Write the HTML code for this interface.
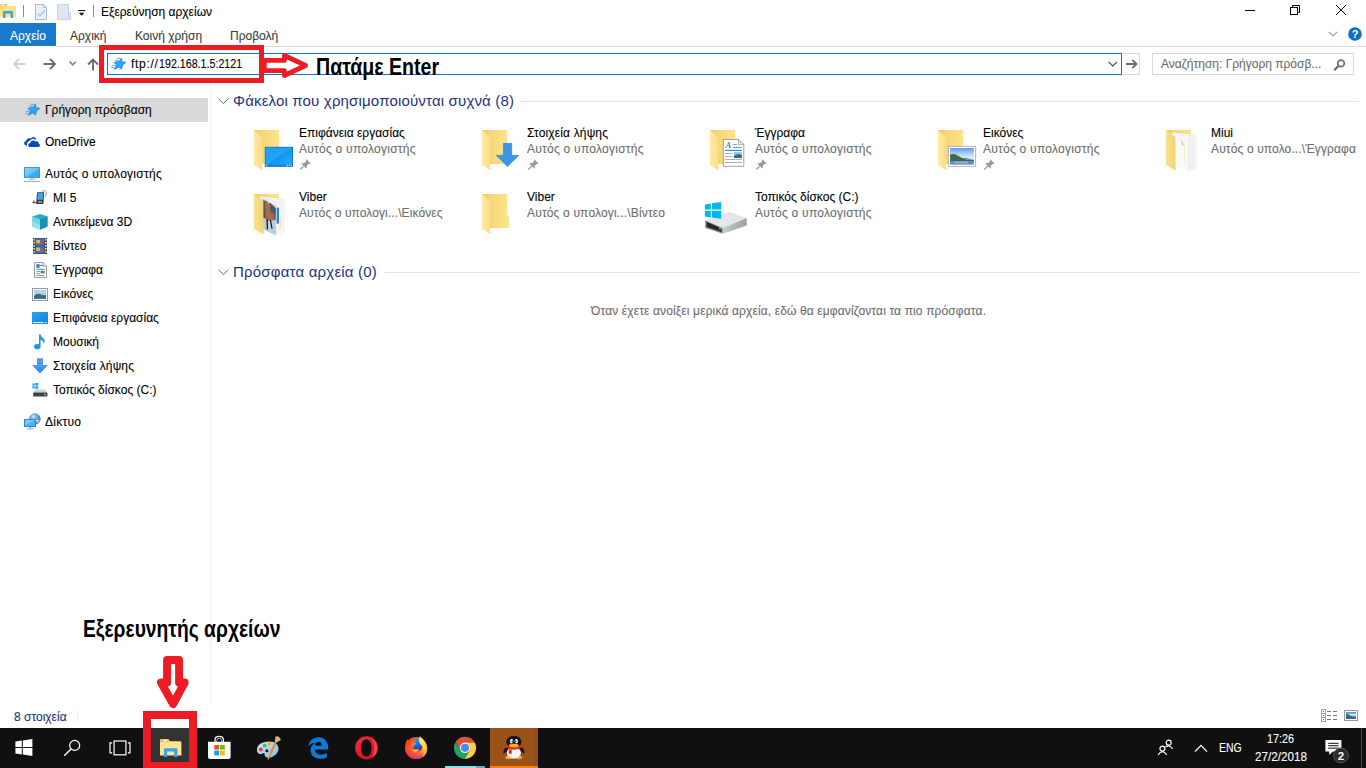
<!DOCTYPE html>
<html>
<head>
<meta charset="utf-8">
<title>Explorer</title>
<style>
html,body{margin:0;padding:0;}
body{width:1366px;height:768px;position:relative;overflow:hidden;background:#fff;font-family:"Liberation Sans",sans-serif;font-size:12px;color:#000;}
.a{position:absolute;white-space:nowrap;line-height:1;}
.t{position:absolute;white-space:nowrap;line-height:14px;font-size:12px;transform-origin:0 50%;-webkit-text-stroke:0.1px currentColor;}
.g{color:#6d6d6d;}
svg{position:absolute;overflow:visible;}
</style>
</head>
<body>

<!-- ================= TITLE BAR ================= -->
<div id="titlebar">
<svg style="left:0;top:4px" width="17" height="15" viewBox="0 0 17 15">
  <path d="M0 1.2 Q0 0 1.2 0 H6.5 L8 2 H15 Q16 2 16 3 V13 H0 Z" fill="#ffe083"/>
  <rect x="0" y="0" width="7" height="2.6" rx="1" fill="#f5c646"/>
  <rect x="1.3" y="0.8" width="3.5" height="1" fill="#fff"/>
  <path d="M3 14 V7.6 Q3 7 3.6 7 H12.4 Q13 7 13 7.6 V14 H10.6 V9.4 H5.4 V14 Z" fill="#3aa7e4"/>
</svg>
<div class="a" style="left:23px;top:5px;width:1px;height:12px;background:#8a8a8a"></div>
<svg style="left:35px;top:4px" width="13" height="16" viewBox="0 0 13 16">
  <path d="M0.5 0.5 H8.5 L11.5 3.5 V15.5 H0.5 Z" fill="#e9eff9" stroke="#a9b8d3"/>
  <path d="M8.5 0.5 V3.5 H11.5" fill="none" stroke="#a9b8d3" stroke-width="0.8"/>
  <path d="M2.6 9.4 L5 11.6 L9.6 6.6" fill="none" stroke="#a9b8d3" stroke-width="1.2"/>
</svg>
<svg style="left:57px;top:4px" width="14" height="16" viewBox="0 0 14 16">
  <path d="M0.5 0.5 H11.5 V9 H13.5 V15.5 H0.5 Z" fill="#dfe7f5" stroke="#c3d0e8"/>
  <path d="M11.5 9 V15.5" stroke="#c3d0e8" fill="none"/>
</svg>
<svg style="left:78px;top:10px" width="8" height="7" viewBox="0 0 8 7">
  <rect x="0" y="0" width="7.2" height="1.1" fill="#111"/>
  <path d="M0.8 2.8 H6.4 L3.6 5.8 Z" fill="#111"/>
</svg>
<div class="a" style="left:93px;top:5px;width:1px;height:12px;background:#8a8a8a"></div>
<div class="t" id="title" style="left:101px;top:5px;">Εξερεύνηση αρχείων</div>
<!-- window controls -->
<div class="a" style="left:1245px;top:10px;width:10px;height:1px;background:#000"></div>
<svg style="left:1289px;top:4px" width="12" height="12" viewBox="0 0 12 12">
  <rect x="1.5" y="3.5" width="7" height="7" fill="#fff" stroke="#000"/>
  <path d="M3.5 3.5 V1.5 H10.5 V8.5 H8.5" fill="none" stroke="#000"/>
</svg>
<svg style="left:1335px;top:4px" width="12" height="12" viewBox="0 0 12 12">
  <path d="M1 1 L11 11 M11 1 L1 11" stroke="#000" stroke-width="1" fill="none"/>
</svg>
</div>

<!-- ================= RIBBON TABS ================= -->
<div id="ribbon">
<div class="a" style="left:0;top:23px;width:56px;height:23px;background:#1979ca"></div>
<div class="a" style="left:56px;top:46px;width:1310px;height:1px;background:#dadbdc"></div>
<div class="t" id="tab1" style="margin-top:1px;left:10px;top:28px;color:#fff">Αρχείο</div>
<div class="t" id="tab2" style="margin-top:1px;left:70px;top:28px;color:#3b3b3b">Αρχική</div>
<div class="t" id="tab3" style="margin-top:1px;left:135px;top:28px;color:#3b3b3b">Κοινή χρήση</div>
<div class="t" id="tab4" style="margin-top:1px;left:230px;top:28px;color:#3b3b3b">Προβολή</div>
<svg style="left:1328px;top:31px" width="10" height="6" viewBox="0 0 10 6">
  <path d="M0.8 0.8 L5 5 L9.2 0.8" fill="none" stroke="#9a9a9a" stroke-width="1.1"/>
</svg>
<svg style="left:1348px;top:27px" width="14" height="14" viewBox="0 0 14 14">
  <circle cx="7" cy="7" r="6.8" fill="#0f6fc8"/>
  <text x="7" y="11" text-anchor="middle" font-family="Liberation Sans" font-weight="bold" font-size="11" fill="#fff">?</text>
</svg>
</div>

<!-- ================= ADDRESS BAR ================= -->
<div id="addr">
<!-- back -->
<svg style="left:13px;top:58px" width="13" height="12" viewBox="0 0 13 12">
  <path d="M12.5 6 H1.5 M6 1 L1 6 L6 11" fill="none" stroke="#d2d2d2" stroke-width="1.9"/>
</svg>
<!-- forward -->
<svg style="left:43px;top:58px" width="13" height="12" viewBox="0 0 13 12">
  <path d="M0.5 6 H11.5 M7 1 L12 6 L7 11" fill="none" stroke="#6d6d6d" stroke-width="1.9"/>
</svg>
<!-- recent chevron -->
<svg style="left:69px;top:61px" width="8" height="5" viewBox="0 0 8 5">
  <path d="M0.6 0.6 L3.7 3.8 L6.8 0.6" fill="none" stroke="#858585" stroke-width="1.6"/>
</svg>
<!-- up -->
<svg style="left:87px;top:58px" width="12" height="13" viewBox="0 0 12 13">
  <path d="M6 12.5 V1.5 M1 6.5 L6 1.5 L11 6.5" fill="none" stroke="#6d6d6d" stroke-width="1.9"/>
</svg>
<!-- address box -->
<div class="a" style="left:107px;top:53px;width:1013px;height:20px;border:1px solid #0078d7;box-sizing:content-box;background:#fff"></div>
<!-- quick access star -->
<svg id="addrstar" style="left:111px;top:57.3px" width="16" height="14" viewBox="0 0 16 14">
  <path d="M10.4 0.9 L11.1 4.8 L14.9 5.3 L11.7 7.9 L10.4 12.2 L7.8 10 L3.2 12.5 L5.4 7.9 L2.9 5.3 L8 4.6 Z" fill="#2aa5f7" stroke="#1489dc" stroke-width="0.7" stroke-linejoin="round"/>
  <path d="M5.9 1.3 H8.8 M4.4 3.4 H7.2 M1.5 8.3 H3.9 M0.5 10.4 H2.8" stroke="#3aa2e8" stroke-width="0.9" stroke-linecap="round" fill="none"/>
</svg>
<div class="t" id="addrtxt" style="left:131px;top:57px;color:#000"><span style="letter-spacing:0.7px">ftp://</span><span style="display:inline-block;transform:scaleX(0.89);transform-origin:0 50%">192.168.1.5:2121</span></div>
<!-- dropdown chevron -->
<svg style="left:1108px;top:61px" width="10" height="6" viewBox="0 0 10 6">
  <path d="M0.6 0.8 L4.8 5 L9 0.8" fill="none" stroke="#444" stroke-width="1.1"/>
</svg>
<!-- go button -->
<div class="a" style="left:1123px;top:53px;width:16px;height:20px;border:1px solid #d9d9d9;border-left:none"></div>
<svg style="left:1126px;top:59px" width="12" height="10" viewBox="0 0 12 10">
  <path d="M0 5 H10.5 M6.3 0.8 L10.6 5 L6.3 9.2" fill="none" stroke="#6d6d6d" stroke-width="1.8"/>
</svg>
<!-- search box -->
<div class="a" style="left:1152px;top:53px;width:200px;height:20px;border:1px solid #d9d9d9"></div>
<div class="t" id="srch" style="left:1161px;top:57px;color:#6d6d6d">Αναζήτηση: Γρήγορη πρόσβ...</div>
<svg style="left:1333px;top:59px" width="13" height="12" viewBox="0 0 13 12">
  <circle cx="8" cy="4.4" r="3.3" fill="none" stroke="#6d6d6d" stroke-width="1.7"/>
  <path d="M5.6 6.8 L1.2 11.2" stroke="#6d6d6d" stroke-width="2.2" fill="none"/>
</svg>
</div>

<!-- ================= NAV PANE ================= -->
<div id="nav">
<div class="a" style="left:0;top:98px;width:208px;height:24px;background:#d9d9d9"></div>
<div class="a" style="left:210px;top:84px;width:1px;height:621px;background:#f2f2f2"></div>
<svg style="left:25px;top:103px" width="16" height="14" viewBox="0 0 16 14">
  <path d="M10.4 0.9 L11.1 4.8 L14.9 5.3 L11.7 7.9 L10.4 12.2 L7.8 10 L3.2 12.5 L5.4 7.9 L2.9 5.3 L8 4.6 Z" fill="#2aa5f7" stroke="#1489dc" stroke-width="0.7" stroke-linejoin="round"/>
  <path d="M5.9 1.3 H8.8 M4.4 3.4 H7.2 M1.5 8.3 H3.9 M0.5 10.4 H2.8" stroke="#3aa2e8" stroke-width="0.9" stroke-linecap="round" fill="none"/>
</svg>
<div class="t" id="n0" style="left:45px;top:103px">Γρήγορη πρόσβαση</div>
<svg style="left:20px;top:132px" width="28" height="20" viewBox="0 0 28 20">
  <path d="M4 11.2 Q4.2 9.2 6.2 8.7 Q6.6 6.5 9 6.2 Q10 6.1 10.6 6.4 Q12 4.8 13.7 4.9 Q15.7 5.2 16.3 7.4 L15.1 7.8 Q14.2 6.5 12.8 6.7 Q11 7 9.7 8.7 Q8 9.5 7.3 10.7 Q6.7 12 7 13.6 Q4.4 13.9 4 11.2 Z" fill="#0b4bb3"/>
  <path d="M9.2 15 Q8 14 8.2 12.6 Q8.6 11.2 10.2 11 Q10.6 8.7 12.8 8.4 Q14.6 8.3 15.5 9.6 Q16.7 8.9 17.8 9.6 Q18.8 10.4 18.8 11.8 Q20.2 12.2 20 13.6 Q19.8 15 18.6 15 Z" fill="#0b4bb3"/>
</svg>
<div class="t" id="n1" style="left:45px;top:135px">OneDrive</div>
<svg style="left:24px;top:167px" width="16" height="15" viewBox="0 0 16 15">
  <defs><linearGradient id="pcg" x1="0" y1="0" x2="1" y2="1"><stop offset="0" stop-color="#8fd6fb"/><stop offset="0.55" stop-color="#5cc0f7"/><stop offset="0.56" stop-color="#3fb0f3"/><stop offset="1" stop-color="#2ea3ee"/></linearGradient></defs>
  <rect x="0.5" y="0.5" width="15" height="10" fill="url(#pcg)" stroke="#3b97d3"/>
  <rect x="6.5" y="11" width="3" height="1.5" fill="#b9c3cc"/>
  <rect x="4" y="12.2" width="8" height="0.9" fill="#b9c3cc"/>
  <rect x="0" y="14" width="16" height="1" fill="#9fb2c4"/>
</svg>
<div class="t" id="n2" style="left:45px;top:167px;letter-spacing:0.26px">Αυτός ο υπολογιστής</div>
<svg style="left:32px;top:190px" width="16" height="15" viewBox="0 0 16 15">
  <path d="M10.5 2 Q11 0.2 13 0.6 Q15.2 1.4 14.2 4 L13 6.5" fill="none" stroke="#7a7a7a" stroke-width="0.8"/>
  <path d="M5.2 2.2 L12.2 2.2 L11.4 14 L4 14 Z" fill="#3a3a3a"/>
  <path d="M6 3.1 L11.3 3.1 L10.8 9.8 L5.3 9.8 Z" fill="#3aa6ef"/>
  <rect x="6" y="11" width="4" height="2" fill="#8d8d8d"/>
  <path d="M0.5 12.5 H3.8 M1 11 L2.2 11 L2.2 13.5" stroke="#555" stroke-width="1" fill="none"/>
</svg>
<div class="t" id="n3" style="left:53px;top:191px">MI 5</div>
<svg style="left:32px;top:214px" width="16" height="16" viewBox="0 0 16 16">
  <path d="M8 0.3 L15.5 2.6 L15.5 12.4 L8 15.7 L0.5 12.4 L0.5 2.6 Z" fill="#32b8d4"/>
  <path d="M0.5 2.6 L8 5 L8 15.7 L0.5 12.4 Z" fill="#6fd6e6"/>
  <path d="M8 0.3 L15.5 2.6 L8 5 L0.5 2.6 Z" fill="#2ea9c6"/>
  <path d="M8 5 L15.5 2.6 L15.5 12.4 L8 15.7 Z" fill="#1d8fb0"/>
  <path d="M0.5 8 L8 11 L8 15.7 L0.5 12.4 Z" fill="#a5e7f0" opacity="0.7"/>
</svg>
<div class="t" id="n4" style="left:53px;top:215px">Αντικείμενα 3D</div>
<svg style="left:33px;top:238px" width="14" height="16" viewBox="0 0 14 16">
  <rect x="0" y="0" width="14" height="16" fill="#4a4a4a"/>
  <rect x="2.6" y="0.8" width="8.8" height="6.8" fill="#3b6fd0"/>
  <rect x="2.6" y="8.4" width="8.8" height="6.8" fill="#3b6fd0"/>
  <rect x="3.2" y="2" width="4" height="3.4" fill="#e2b93b"/><rect x="7.6" y="3" width="3" height="3" fill="#c9473b"/>
  <rect x="3.2" y="9.6" width="4" height="3.4" fill="#e2b93b"/><rect x="7.6" y="10.6" width="3" height="3" fill="#c9473b"/>
  <g fill="#fff"><rect x="0.6" y="1" width="1.2" height="1.6"/><rect x="0.6" y="4" width="1.2" height="1.6"/><rect x="0.6" y="7" width="1.2" height="1.6"/><rect x="0.6" y="10" width="1.2" height="1.6"/><rect x="0.6" y="13" width="1.2" height="1.6"/>
  <rect x="12.2" y="1" width="1.2" height="1.6"/><rect x="12.2" y="4" width="1.2" height="1.6"/><rect x="12.2" y="7" width="1.2" height="1.6"/><rect x="12.2" y="10" width="1.2" height="1.6"/><rect x="12.2" y="13" width="1.2" height="1.6"/></g>
</svg>
<div class="t" id="n5" style="left:53px;top:239px">Βίντεο</div>
<svg style="left:34px;top:262px" width="13" height="16" viewBox="0 0 13 16">
  <path d="M0.5 0.5 H9 L12.5 4 V15.5 H0.5 Z" fill="#fff" stroke="#9a9a9a"/>
  <path d="M9 0.5 V4 H12.5" fill="#eee" stroke="#9a9a9a"/>
  <rect x="2.4" y="2.2" width="3.2" height="3.6" fill="#2e74cf"/>
  <rect x="6.2" y="3" width="2.4" height="1" fill="#2e74cf"/>
  <rect x="2.4" y="6.8" width="8.2" height="1" fill="#2e8fde"/>
  <rect x="2.4" y="9" width="3.6" height="0.9" fill="#8a8a8a"/><rect x="6.6" y="8.8" width="4" height="2.6" fill="#3c8f86"/>
  <rect x="2.4" y="11" width="3.6" height="0.9" fill="#8a8a8a"/>
  <rect x="2.4" y="13" width="8.2" height="0.9" fill="#8a8a8a"/>
</svg>
<div class="t" id="n6" style="left:53px;top:263px">Έγγραφα</div>
<svg style="left:32px;top:288px" width="16" height="13" viewBox="0 0 16 13">
  <rect x="0.5" y="0.5" width="15" height="12" fill="#fff" stroke="#9a9a9a"/>
  <rect x="2" y="2" width="12" height="9" fill="#a9d4ee"/>
  <path d="M2 8 Q5 4.6 9 6.6 Q12 7.4 14 7 V11 H2 Z" fill="#3f6f6a"/>
  <rect x="2" y="9.4" width="12" height="1.6" fill="#2f78b8"/>
</svg>
<div class="t" id="n7" style="left:53px;top:287px">Εικόνες</div>
<svg style="left:32px;top:312px" width="16" height="12" viewBox="0 0 16 13" preserveAspectRatio="none">
  <defs><linearGradient id="dkg" x1="0" y1="0" x2="1" y2="1"><stop offset="0" stop-color="#2ea1ef"/><stop offset="0.5" stop-color="#1f93ea"/><stop offset="1" stop-color="#0e83e0"/></linearGradient></defs>
  <rect x="0" y="0" width="16" height="13" fill="url(#dkg)"/>
  <rect x="1" y="11" width="10.5" height="1" fill="#fff"/><rect x="12.4" y="11" width="1" height="1" fill="#fff"/><rect x="14" y="11" width="1" height="1" fill="#fff"/>
</svg>
<div class="t" id="n8" style="left:53px;top:311px">Επιφάνεια εργασίας</div>
<svg style="left:34px;top:334px" width="12" height="16" viewBox="0 0 12 16">
  <path d="M5 0.5 H6.6 Q7.2 3 9.6 4.6 Q11.8 6.6 9.6 10.4 Q10 7.2 6.6 5.6 V12.6 A3.3 2.8 0 1 1 5 10.2 Z" fill="#2793ea"/>
</svg>
<div class="t" id="n9" style="left:53px;top:335px">Μουσική</div>
<svg style="left:32px;top:358px" width="16" height="16" viewBox="0 0 16 16">
  <path d="M5.2 0.5 H10.8 V7.2 H15.6 L8 15.5 L0.4 7.2 H5.2 Z" fill="#3c8de2"/>
  <path d="M5.2 0.5 H10.8 V7.2 H15.6 L13.6 9.4 H2.4 L0.4 7.2 H5.2 Z" fill="#4a9bec"/>
</svg>
<div class="t" id="n10" style="left:53px;top:359px;letter-spacing:0.15px">Στοιχεία λήψης</div>
<svg style="left:32px;top:383px" width="16" height="14" viewBox="0 0 16 14">
  <g fill="#1fa3e8"><rect x="0.4" y="0.4" width="2.4" height="2.2"/><rect x="3.4" y="0" width="2.8" height="2.6"/><rect x="0.4" y="3.2" width="2.4" height="2.2"/><rect x="3.4" y="3.2" width="2.8" height="2.6"/></g>
  <path d="M3.4 6.6 H13 L15.4 9.6 H1.2 Z" fill="#cfd2d4"/>
  <rect x="1.2" y="9.6" width="14.2" height="4" rx="0.6" fill="#3e4042"/>
  <rect x="12" y="11" width="1.8" height="1.3" fill="#4be05a"/>
</svg>
<div class="t" id="n11" style="left:53px;top:383px">Τοπικός δίσκος (C:)</div>
<svg style="left:24px;top:413px" width="17" height="17" viewBox="0 0 17 17">
  <defs><radialGradient id="glb" cx="0.4" cy="0.35" r="0.7"><stop offset="0" stop-color="#9fd0ee"/><stop offset="1" stop-color="#2c72b4"/></radialGradient></defs>
  <circle cx="10.8" cy="6" r="5.8" fill="url(#glb)"/>
  <path d="M7.6 2.4 Q10 1.4 11.6 2.8 Q10.6 5 8.4 4.6 Z M12 6.6 Q14.6 6 15.6 8 Q14 10.4 12.4 9.6 Z" fill="#cfe6f4" opacity="0.8"/>
  <rect x="0.5" y="6.5" width="11" height="7" fill="#49b4f4" stroke="#2f86c8"/>
  <path d="M1 7 L11 7 L1 12 Z" fill="#86d0fa" opacity="0.8"/>
  <rect x="5" y="14" width="2" height="1.4" fill="#9ab0c2"/><rect x="2.6" y="15.4" width="7" height="1" fill="#9ab0c2"/>
</svg>
<div class="t" id="n12" style="left:45px;top:415px;letter-spacing:0.25px">Δίκτυο</div>
</div>

<!-- ================= CONTENT ================= -->
<div id="content">
<svg width="0" height="0" style="left:0;top:0"><defs>
<linearGradient id="fb" x1="0" y1="0" x2="1" y2="0"><stop offset="0" stop-color="#efcb68"/><stop offset="0.6" stop-color="#fadc7f"/><stop offset="1" stop-color="#fde38c"/></linearGradient>
<linearGradient id="ff" x1="0" y1="0" x2="1" y2="0"><stop offset="0" stop-color="#ffe9a6"/><stop offset="1" stop-color="#fbdc82"/></linearGradient>
<linearGradient id="dsk" x1="0" y1="0" x2="1" y2="1"><stop offset="0" stop-color="#23a0f3"/><stop offset="0.48" stop-color="#21a3f6"/><stop offset="0.5" stop-color="#0f96f0"/><stop offset="1" stop-color="#2aa8f8"/></linearGradient>
<linearGradient id="sky" x1="0" y1="0" x2="0" y2="1"><stop offset="0" stop-color="#5f9dea"/><stop offset="0.5" stop-color="#cfe6f6"/><stop offset="1" stop-color="#e8f3fa"/></linearGradient>
<linearGradient id="drv" x1="0" y1="0" x2="1" y2="0"><stop offset="0" stop-color="#c9cbcd"/><stop offset="1" stop-color="#9d9fa1"/></linearGradient>
<g id="fback"><path d="M7.9 7.9 H33.2 V41.9 H16 Z" fill="url(#fb)"/></g>
<g id="ffront"><path d="M7.9 8.1 L17 15.4 V37.2 L16.1 37.8 V48.2 L7.9 42.8 Z" fill="url(#ff)"/></g>
<linearGradient id="ff2" x1="0" y1="0" x2="1" y2="0"><stop offset="0" stop-color="#fbe08c"/><stop offset="1" stop-color="#f5d370"/></linearGradient>
<g id="ffront2"><path d="M8.1 8.1 L17.4 15.2 V48.6 L8.1 42.8 Z" fill="url(#ff2)"/></g>
<g id="pin"><path d="M6.2 0.4 L10 4.2 L9.2 4.9 L8.5 4.4 L6.4 6.5 Q6.9 8 5.9 9 L1.4 4.5 Q2.4 3.5 3.9 4 L6 1.9 L5.5 1.2 Z" fill="#909ba3"/><path d="M3.4 6.9 L0.3 10" stroke="#909ba3" stroke-width="1.1"/></g>
</defs></svg>
<svg style="left:218px;top:98px" width="11" height="7" viewBox="0 0 11 7"><path d="M0.5 0.6 L5.4 5.6 L10.3 0.6" fill="none" stroke="#6d6d6d" stroke-width="1"/></svg>
<div class="a" id="h1" style="left:233px;top:92px;font-size:15px;line-height:17px;color:#1e3287;letter-spacing:0.17px">Φάκελοι που χρησιμοποιούνται συχνά (8)</div>
<div class="a" style="left:521px;top:101px;width:838px;height:1px;background:#e2e2e2"></div>
<svg style="left:218px;top:269px" width="11" height="7" viewBox="0 0 11 7"><path d="M0.5 0.6 L5.4 5.6 L10.3 0.6" fill="none" stroke="#6d6d6d" stroke-width="1"/></svg>
<div class="a" id="h2" style="left:233px;top:263px;font-size:15px;line-height:17px;color:#1e3287;letter-spacing:0.2px">Πρόσφατα αρχεία (0)</div>
<div class="a" style="left:385px;top:272px;width:974px;height:1px;background:#e2e2e2"></div>
<svg style="left:246px;top:122px" width="56" height="56" viewBox="0 0 56 56"><use href="#fback"/><path d="M16.1 48.2 L19.5 46.4 L16.1 45 Z" fill="#e9e9e9" opacity="0.7"/><use href="#ffront"/><rect x="19.3" y="25.3" width="27.2" height="19" fill="url(#dsk)" stroke="#0b78c6"/>
<rect x="19.8" y="42.6" width="26.2" height="1.6" fill="#0b78c6" opacity="0.6"/>
<rect x="20.2" y="42.8" width="1" height="1" fill="#fff"/><rect x="40.8" y="42.8" width="1" height="1" fill="#fff"/><rect x="42.8" y="42.8" width="1" height="1" fill="#fff"/><rect x="44.8" y="42.8" width="1" height="1" fill="#fff"/></svg>
<div class="t" id="tn0" style="left:299px;top:126px">Επιφάνεια εργασίας</div>
<div class="t g" id="ts0" style="left:299px;top:142px;letter-spacing:0.25px">Αυτός ο υπολογιστής</div>
<svg style="left:299.6px;top:158.6px" width="11.6" height="10.5" viewBox="0 0 11 10"><use href="#pin"/></svg>
<svg style="left:474px;top:122px" width="56" height="56" viewBox="0 0 56 56"><use href="#fback"/><path d="M16.1 48.2 L19.5 46.4 L16.1 45 Z" fill="#e9e9e9" opacity="0.7"/><use href="#ffront"/><path d="M29.4 21.3 H37.7 V33.3 H45 L33.5 44.6 L22 33.3 H29.4 Z" fill="#3c96e8" stroke="#2b7fd6" stroke-width="0.6"/></svg>
<div class="t" id="tn1" style="left:527px;top:126px;letter-spacing:0.15px">Στοιχεία λήψης</div>
<div class="t g" id="ts1" style="left:527px;top:142px;letter-spacing:0.25px">Αυτός ο υπολογιστής</div>
<svg style="left:527.6px;top:158.6px" width="11.6" height="10.5" viewBox="0 0 11 10"><use href="#pin"/></svg>
<svg style="left:702px;top:122px" width="56" height="56" viewBox="0 0 56 56"><use href="#fback"/><path d="M16.1 48.2 L19.5 46.4 L16.1 45 Z" fill="#e9e9e9" opacity="0.7"/><use href="#ffront"/><path d="M21.4 17.5 H36.5 L41.8 22.6 V44.3 H21.4 Z" fill="#fff" stroke="#8e8e8e" stroke-width="0.8"/>
<path d="M36.5 17.5 V22.6 H41.8 Z" fill="#e4e4e4" stroke="#8e8e8e" stroke-width="0.6"/>
<text x="23.6" y="25.8" font-family="Liberation Serif" font-style="italic" font-weight="bold" font-size="8.5" fill="#1f86dc">A</text>
<rect x="31.4" y="21.9" width="3.4" height="0.9" fill="#3a98e4"/><rect x="31" y="25" width="8.8" height="0.9" fill="#3a98e4"/>
<rect x="23" y="27.9" width="17" height="1" fill="#0d7fd8"/>
<rect x="23" y="31" width="7.8" height="0.9" fill="#a6a6a6"/><rect x="23" y="34" width="7.8" height="0.9" fill="#a6a6a6"/>
<rect x="23" y="37" width="17" height="0.9" fill="#a6a6a6"/><rect x="23" y="40" width="17" height="0.9" fill="#a6a6a6"/>
<rect x="32" y="30.2" width="7.8" height="5.6" fill="#8ec0e6"/><path d="M32 34 Q35 31 39.8 33 V35.8 H32 Z" fill="#3e6e52"/><rect x="32" y="34.8" width="7.8" height="1" fill="#2b5fa4"/></svg>
<div class="t" id="tn2" style="left:755px;top:126px">Έγγραφα</div>
<div class="t g" id="ts2" style="left:755px;top:142px;letter-spacing:0.25px">Αυτός ο υπολογιστής</div>
<svg style="left:755.6px;top:158.6px" width="11.6" height="10.5" viewBox="0 0 11 10"><use href="#pin"/></svg>
<svg style="left:930px;top:122px" width="56" height="56" viewBox="0 0 56 56"><use href="#fback"/><path d="M16.1 48.2 L19.5 46.4 L16.1 45 Z" fill="#e9e9e9" opacity="0.7"/><use href="#ffront"/><rect x="18.3" y="24.3" width="27.4" height="20" fill="#fff" stroke="#a3a3a3" stroke-width="0.8"/>
<rect x="20.1" y="26" width="23.8" height="16.6" fill="url(#sky)"/>
<path d="M20.1 32.4 Q24 31.2 27 33.2 Q31 36 36 36.6 Q40 37.2 43.9 38 V39.2 H20.1 Z" fill="#3f6a4c"/>
<path d="M33 36 Q36 35.2 39 36.8 L43.9 38 L36 38 Z" fill="#6b9fc8" opacity="0.8"/>
<rect x="20.1" y="39" width="23.8" height="3.6" fill="#5d8fc4"/><rect x="24" y="39.6" width="14" height="1.6" fill="#a9c6e2" opacity="0.7"/></svg>
<div class="t" id="tn3" style="left:983px;top:126px">Εικόνες</div>
<div class="t g" id="ts3" style="left:983px;top:142px;letter-spacing:0.25px">Αυτός ο υπολογιστής</div>
<svg style="left:983.6px;top:158.6px" width="11.6" height="10.5" viewBox="0 0 11 10"><use href="#pin"/></svg>
<svg style="left:1158px;top:122px" width="56" height="56" viewBox="0 0 56 56"><use href="#fback"/><path d="M14 10.6 L38.6 13.2 V46 L17 46 Z" fill="#f4f4f4"/>
<path d="M30.6 13.4 L38.8 13.2 V46 L30.6 49 Z" fill="#f1f1f1"/>
<path d="M17 12 L30.4 16 V49.6 L17 43 Z" fill="#fafafa"/>
<path d="M23 16.6 L26.6 22 V42 " fill="none" stroke="#f5e3a8" stroke-width="0.5"/>
<path d="M23 16.4 L26.8 23.8 L23.2 23 Z" fill="#d9d9d9"/>
<path d="M30.6 16 V49.4" stroke="#e2e2e2" stroke-width="0.6"/><path d="M16.1 48.2 L19.5 46.4 L16.1 45 Z" fill="#e9e9e9" opacity="0.7"/><use href="#ffront2"/></svg>
<div class="t" id="tn4" style="left:1211px;top:126px">Miui</div>
<div class="t g" id="ts4" style="left:1211px;top:142px;letter-spacing:0.13px">Αυτός ο υπολο...\Έγγραφα</div>
<svg style="left:246px;top:186px" width="56" height="56" viewBox="0 0 56 56"><use href="#fback"/><path d="M14 10.6 L38.6 13.2 V46 L17 46 Z" fill="#f4f4f4"/>
<path d="M30 13.4 L38.8 13.2 V46 L30 49 Z" fill="#f3f3f3"/>
<rect x="30.6" y="21.6" width="2.4" height="16" fill="#2d7fe0"/>
<path d="M34.4 30 V42" stroke="#f3dc94" stroke-width="0.6"/>
<path d="M16.6 11.8 L30 15.6 V49.6 L16.6 43 Z" fill="#b9cfdf"/>
<path d="M16.6 11.8 L30 15.6 L33.6 21 L22 16 Z" fill="#eef3f6"/>
<path d="M17 14.6 L22 15 L29.6 22 V34 L17 32 Z" fill="#4d5b4f"/>
<path d="M19 15 Q22 14.4 23.6 18 L27.6 27 L28.6 34 L24 35 L20 34 L19 26 Z" fill="#a9694a"/>
<path d="M17 22.4 L19.2 22.8 V27.6 L17 27.4 Z M24 21 L29.6 22.4 V27.6 L25 27 Z" fill="#3e5f73"/>
<path d="M20.4 33 L21.8 33.2 L22 43.6 L20.8 43.4 Z M23.8 34 L25 34.2 L26.6 42.6 L25.4 42.8 Z" fill="#15151a"/>
<path d="M21 15 Q22.6 13.8 23.6 16.6 L22.6 17.6 Z" fill="#e8eef2"/><path d="M16.1 48.2 L19.5 46.4 L16.1 45 Z" fill="#e9e9e9" opacity="0.7"/><use href="#ffront2"/></svg>
<div class="t" id="tn5" style="left:299px;top:190px">Viber</div>
<div class="t g" id="ts5" style="left:299px;top:206px;letter-spacing:0.1px">Αυτός ο υπολογι...\Εικόνες</div>
<svg style="left:474px;top:186px" width="56" height="56" viewBox="0 0 56 56"><use href="#fback"/><path d="M33.2 29 L35 30.2 V41.9 H33.2 Z" fill="#fde38c"/><path d="M16.1 48.2 L19.5 46.4 L16.1 45 Z" fill="#e9e9e9" opacity="0.7"/><use href="#ffront"/></svg>
<div class="t" id="tn6" style="left:527px;top:190px">Viber</div>
<div class="t g" id="ts6" style="left:527px;top:206px;letter-spacing:0.16px">Αυτός ο υπολογι...\Βίντεο</div>
<svg style="left:698px;top:186px" width="56" height="56" viewBox="0 0 56 56">
<path d="M7.1 34.3 L32 26 L48.7 32 L24.8 42 Z" fill="#e4e6e8"/>
<path d="M7.1 34.3 L24.8 42 V47.7 L7.1 42 Z" fill="#8f9193"/>
<path d="M8.6 35.8 L23.6 42.4 V46 L8.6 41 Z" fill="#262626"/>
<path d="M24.8 42 L48.7 32 V39.5 L24.8 47.7 Z" fill="url(#drv)"/>
<rect x="21" y="41.6" width="2.2" height="1.8" fill="#3fe24a"/>
<g fill="#00b7f1"><path d="M6.9 18.6 L12.8 17.4 V23.6 L6.9 23.6 Z"/><path d="M14 17.2 L23.2 15.9 V23.6 H14 Z"/><path d="M6.9 24.8 H12.8 V31.4 L6.9 30.4 Z"/><path d="M14 24.8 H23.2 V32.8 L14 31.6 Z"/></g>
</svg>
<div class="t" id="tn7" style="left:755px;top:190px">Τοπικός δίσκος (C:)</div>
<div class="t g" id="ts7" style="left:755px;top:206px;letter-spacing:0.25px">Αυτός ο υπολογιστής</div>
<div class="t g" id="empty" style="left:591px;top:304px;letter-spacing:0.135px">Όταν έχετε ανοίξει μερικά αρχεία, εδώ θα εμφανίζονται τα πιο πρόσφατα.</div>
</div>

<!-- ================= STATUS BAR ================= -->
<div id="status">
<div class="t" id="st" style="left:14px;top:710px;color:#1e3287">8 στοιχεία</div>
<div class="a" style="left:77px;top:711px;width:1px;height:11px;background:#ececec"></div>
<svg style="left:1321px;top:709px" width="17" height="13" viewBox="0 0 17 13" shape-rendering="crispEdges">
  <rect x="0.5" y="0.5" width="4" height="12" fill="#fff" stroke="#a3a3a3"/>
  <rect x="0" y="4" width="5" height="1" fill="#a3a3a3"/><rect x="0" y="8" width="5" height="1" fill="#a3a3a3"/>
  <rect x="2" y="2" width="1" height="1" fill="#3c7a5a"/><rect x="2" y="6" width="1" height="1" fill="#4d90fe"/><rect x="2" y="10" width="1" height="1" fill="#d62a2a"/>
  <g fill="#7a7a7a"><rect x="6" y="2" width="4" height="1"/><rect x="12" y="2" width="4" height="1"/><rect x="6" y="6" width="4" height="1"/><rect x="12" y="6" width="4" height="1"/><rect x="6" y="10" width="4" height="1"/><rect x="12" y="10" width="4" height="1"/></g>
</svg>
<svg style="left:1344px;top:710px" width="14" height="11" viewBox="0 0 14 11">
  <rect x="0.5" y="0.5" width="13" height="10" fill="#fff" stroke="#9a9a9a"/>
  <rect x="2" y="2" width="10" height="7" fill="#5a98ea"/><rect x="5" y="3.6" width="7" height="2.6" fill="#d9e9f6" opacity="0.85"/>
  <path d="M2 4.6 Q4 4 6 5.4 Q9 7 12 6.6 V9 H2 Z" fill="#3f6a55"/><rect x="2" y="7.6" width="10" height="1.4" fill="#2b66ae"/>
</svg>
</div>

<!-- ================= TASKBAR ================= -->
<div id="taskbar">
<div class="a" style="left:0;top:728px;width:1366px;height:40px;background:#101010"></div>
<!-- active explorer tile -->
<div class="a" style="left:146px;top:728px;width:48px;height:40px;background:#333"></div>
<!-- start -->
<svg style="left:15px;top:739px" width="18" height="17" viewBox="0 0 18 17">
  <path d="M0.4 2.6 L6.8 1.6 V8 H0.4 Z M7.8 1.5 L17.4 0.1 V8 H7.8 Z M0.4 9 H6.8 V15.4 L0.4 14.4 Z M7.8 9 H17.4 V16.9 L7.8 15.5 Z" fill="#fff"/>
</svg>
<!-- search -->
<svg style="left:63px;top:739px" width="18" height="18" viewBox="0 0 18 18">
  <circle cx="11.7" cy="6.4" r="5" fill="none" stroke="#fff" stroke-width="1.2"/>
  <path d="M8.1 10 L1.2 16.8" stroke="#fff" stroke-width="1.4"/>
</svg>
<!-- task view -->
<svg style="left:109px;top:740px" width="22" height="16" viewBox="0 0 22 16">
  <rect x="5.1" y="1" width="11.8" height="13.8" fill="none" stroke="#fff" stroke-width="1.2"/>
  <path d="M3.2 2.9 H1 V12.9 H3.2 M18.8 2.9 H21 V12.9 H18.8" fill="none" stroke="#fff" stroke-width="1.2"/>
</svg>
<!-- explorer -->
<svg style="left:160px;top:739px" width="22" height="18" viewBox="0 0 22 18">
  <path d="M0 1.4 Q0 0 1.4 0 H8 L10 2.2 H20 Q21.4 2.2 21.4 3.6 V16.4 H0 Z" fill="#ffe591"/>
  <path d="M0 1.4 Q0 0 1.4 0 H8 L9.2 1.4 V3.2 H0 Z" fill="#f5c84c"/>
  <rect x="1.8" y="1" width="5" height="1.2" fill="#fff"/><rect x="1.8" y="1" width="1.3" height="1.2" fill="#48b0ea"/>
  <path d="M4 18 V10.2 Q4 9.2 5 9.2 H16.4 Q17.4 9.2 17.4 10.2 V18 H14.2 V12.6 H7.2 V18 Z" fill="#3aa5e6"/>
</svg>
<!-- store -->
<svg style="left:207px;top:735px" width="25" height="25" viewBox="0 0 25 25">
  <path d="M8 7 V5 Q8 1.4 12.2 1.4 Q16.4 1.4 16.4 5 V7" fill="none" stroke="#fff" stroke-width="1.2"/>
  <path d="M9.8 7 V5.6 Q9.8 3.4 12.2 3.4 Q14.6 3.4 14.6 5.6 V7" fill="none" stroke="#ddd" stroke-width="0.8"/>
  <path d="M1 6.8 H23.6 V22 Q23.6 24 21.6 24 H3 Q1 24 1 22 Z" fill="#fff"/>
  <rect x="7.3" y="10" width="4.8" height="4.6" fill="#f25022"/><rect x="13" y="10" width="4.8" height="4.6" fill="#7fba00"/>
  <rect x="7.3" y="15.6" width="4.8" height="4.8" fill="#00a4ef"/><rect x="13" y="15.6" width="4.8" height="4.8" fill="#ffb900"/>
</svg>
<!-- paint -->
<svg style="left:255px;top:735px" width="28" height="26" viewBox="0 0 28 26">
  <defs><linearGradient id="pal" x1="0" y1="0" x2="1" y2="1"><stop offset="0" stop-color="#d6eafa"/><stop offset="1" stop-color="#86b8e0"/></linearGradient></defs>
  <path d="M2 16 Q1.2 9.4 9 7.2 Q18 5 22.4 10 Q25.4 15 20.4 20 Q15.4 24 11.4 22.4 Q9.2 21 9.6 19.2 Q9.8 17.4 7.4 18.6 Q3.4 20.4 2 16 Z" fill="url(#pal)"/>
  <circle cx="5.8" cy="14.4" r="2" fill="#e2473f"/><circle cx="9.7" cy="10.5" r="1.9" fill="#5cb84a"/><circle cx="14.5" cy="8.7" r="1.9" fill="#f0b429"/>
  <ellipse cx="11.9" cy="15.8" rx="1.6" ry="1.5" fill="#141c26"/>
  <path d="M12.6 24.8 L13.6 24.9 L20.8 9.4 L18.8 8.6 Q15 17 12.6 24.8 Z" fill="#ea8a26"/>
  <path d="M18.8 8.6 L20.8 9.4 L21.6 7.6 L19.8 6.8 Z" fill="#9aa0a6"/>
  <path d="M19.8 6.8 L20.4 1.6 Q22.6 0.4 24.4 2.4 Q25.8 3.8 25.8 5 L21.6 7.6 Z" fill="#d9b27e"/>
</svg>
<!-- edge -->
<svg style="left:308px;top:737px" width="21" height="22" viewBox="0 0 21 22">
  <path d="M0.2 9.6 Q1 2 8.6 0.4 Q16 -0.6 19.2 5.6 Q20.6 8.6 20.2 12.6 H6.8 Q7.2 17.4 12.4 17.8 Q16 17.8 18.8 16 V20.4 Q15.4 22 11.2 21.8 Q3 21 2.6 13.4 Q2.6 8.4 7.2 5.8 Q3 5.8 0.2 9.6 Z M6.9 8.8 H14 Q13.8 4.8 10.2 4.8 Q7.2 5.2 6.9 8.8 Z" fill="#0c7ad6" fill-rule="evenodd"/>
</svg>
<!-- opera -->
<svg style="left:355px;top:736px" width="24" height="24" viewBox="0 0 24 24">
  <defs><linearGradient id="opg" x1="0" y1="0" x2="1" y2="1"><stop offset="0" stop-color="#ff2a3a"/><stop offset="1" stop-color="#c20a1c"/></linearGradient></defs>
  <path d="M11.6 0.3 A11.4 11.6 0 1 0 11.6 23.5 A11.4 11.6 0 1 0 11.6 0.3 Z M11.4 3.2 Q16.4 3.6 16.6 11.9 Q16.4 20.2 11.4 20.6 Q6.2 20.2 6 11.9 Q6.2 3.6 11.4 3.2 Z" fill="url(#opg)" fill-rule="evenodd"/>
  <path d="M15.8 2.2 Q22 4.6 22.4 11.9 Q22 19.2 15.8 21.6 Q19.2 18.4 19.2 11.9 Q19.2 5.4 15.8 2.2 Z" fill="#ff4a55" opacity="0.8"/>
</svg>
<!-- firefox -->
<svg style="left:404px;top:735px" width="24" height="25" viewBox="0 0 24 25">
  <defs>
  <linearGradient id="ffx" x1="0.1" y1="0.2" x2="0.95" y2="0.75"><stop offset="0" stop-color="#ff3a26"/><stop offset="0.35" stop-color="#ff5a1c"/><stop offset="0.7" stop-color="#ff9a14"/><stop offset="1" stop-color="#ffc42e"/></linearGradient>
  <linearGradient id="ffm" x1="0" y1="0" x2="0" y2="1"><stop offset="0.55" stop-color="#e31587" stop-opacity="0"/><stop offset="1" stop-color="#e31587" stop-opacity="0.9"/></linearGradient>
  <linearGradient id="ffb" x1="0.3" y1="0" x2="0.6" y2="1"><stop offset="0" stop-color="#22a6ff"/><stop offset="0.55" stop-color="#1667e8"/><stop offset="1" stop-color="#3a1e9a"/></linearGradient>
  <linearGradient id="ffy" x1="0" y1="0" x2="0.2" y2="1"><stop offset="0" stop-color="#fff36a"/><stop offset="0.6" stop-color="#ffd23a"/><stop offset="1" stop-color="#ffa41c"/></linearGradient>
  <linearGradient id="fxo" x1="0" y1="0" x2="1" y2="0.4"><stop offset="0" stop-color="#ff3a26"/><stop offset="1" stop-color="#ff9a14"/></linearGradient>
  </defs>
  <circle cx="12" cy="13" r="11" fill="url(#ffx)"/>
  <path d="M1.4 10.4 Q1.6 6.4 3.4 4 Q4 6.2 5.6 7 Z" fill="#ff3a26"/>
  <circle cx="12" cy="13" r="11" fill="url(#ffm)"/>
  <circle cx="12.2" cy="10.3" r="6.5" fill="url(#ffb)"/>
  <path d="M3.6 5.6 Q5.4 6.6 6.8 6.2 Q8.6 4.6 10.6 5 Q9.8 6.4 10.6 7.6 Q12.6 7.7 12.2 9 Q10.8 9.8 9.8 11 Q9.6 12.4 8.4 12.9 Q9.4 14.7 11.4 14.6 Q13.4 14.2 14.8 15 Q13.2 17.6 10.2 17.2 Q7 16.8 5.4 13.8 Q4 10.8 4.6 8 Z" fill="url(#fxo)"/>
  <path d="M8.4 13.4 Q10.2 15 12.6 14.4 Q14.6 13.8 15.4 14.8 Q14 17 11 16.6 Q9 16.2 8.4 13.4 Z" fill="#ffb020"/>
  <path d="M15.7 1.3 Q19.6 4 21.8 8 Q24 12.6 22.6 17.4 Q21.2 20.8 18.4 22.6 Q20.4 18.6 19.2 14.2 Q18 10.2 15.4 7.8 Q14.2 4.4 15.7 1.3 Z" fill="url(#ffy)"/>
</svg>
<!-- chrome -->
<svg style="left:453px;top:736px" width="24" height="24" viewBox="0 0 24 24">
  <path d="M7.5 14.4 L2.59 5.91 A11.1 11.1 0 0 1 21.81 6.6 L12 6.6 L12 11.8 Z" fill="#dd5144"/>
  <path d="M12 6.6 L21.81 6.6 A11.1 11.1 0 0 1 11.6 22.89 L16.5 14.4 L12 11.8 Z" fill="#ffcd46"/>
  <path d="M16.5 14.4 L11.6 22.89 A11.1 11.1 0 0 1 2.59 5.91 L7.5 14.4 L12 11.8 Z" fill="#1da462"/>
  <circle cx="12" cy="11.8" r="5.2" fill="#f1f1f1"/>
  <circle cx="12" cy="11.8" r="4.1" fill="#4c8bf5"/>
</svg>
<div class="a" style="left:445px;top:766px;width:31px;height:2px;background:#7fe3ec"></div>
<div class="a" style="left:476px;top:766px;width:9px;height:2px;background:#5cb0b6"></div>
<!-- QQ tile -->
<div class="a" style="left:490px;top:728px;width:44px;height:38px;background:#98521a"></div>
<div class="a" style="left:534px;top:728px;width:4px;height:38px;background:#924c16"></div>
<div class="a" style="left:490px;top:766px;width:48px;height:2px;background:#ff7f0a"></div>
<svg style="left:502px;top:735px" width="24" height="25" viewBox="0 0 24 25">
  <ellipse cx="6.7" cy="22.3" rx="3.4" ry="1.9" fill="#f7a81c"/><ellipse cx="16.9" cy="22.3" rx="3.4" ry="1.9" fill="#f7a81c"/>
  <path d="M4.4 11.6 Q1.2 14.6 1.2 18.6 Q3 18.4 5 15 Z M19.4 11.6 Q22.6 14.6 22.6 18.6 Q20.8 18.4 18.8 15 Z" fill="#15151d"/>
  <ellipse cx="11.9" cy="15.8" rx="8" ry="7.6" fill="#15151d"/>
  <ellipse cx="11.9" cy="17.8" rx="7.2" ry="5.9" fill="#f6f6f8"/>
  <ellipse cx="11.9" cy="6.9" rx="7.6" ry="6.1" fill="#15151d"/>
  <ellipse cx="9.6" cy="6.3" rx="1.6" ry="2.3" fill="#fff"/><ellipse cx="14.3" cy="6.3" rx="1.6" ry="2.3" fill="#fff"/>
  <ellipse cx="10.2" cy="6.5" rx="0.7" ry="1" fill="#111"/><ellipse cx="13.7" cy="6.5" rx="0.7" ry="1" fill="#111"/>
  <path d="M3.7 9.6 Q11.9 15.4 20.3 9.6 L20.7 12 Q11.9 17.6 3.3 12 Z" fill="#e8281c"/>
  <rect x="6.7" y="14.6" width="3" height="4.2" fill="#e8281c"/>
  <ellipse cx="11.9" cy="10.6" rx="5" ry="1.9" fill="#f9b51a"/>
</svg>
<!-- tray -->
<svg style="left:1157px;top:739px" width="17" height="17" viewBox="0 0 17 17">
  <circle cx="11.7" cy="3.7" r="2.5" fill="none" stroke="#fff" stroke-width="1.2"/>
  <path d="M8.6 8.2 Q11.8 5 15.6 9.8" fill="none" stroke="#fff" stroke-width="1.2"/>
  <circle cx="5.4" cy="9.6" r="2.5" fill="#101010" stroke="#fff" stroke-width="1.2"/>
  <path d="M1 16 Q5.4 9.4 9.8 16" fill="none" stroke="#fff" stroke-width="1.2"/>
</svg>
<svg style="left:1194px;top:744px" width="14" height="9" viewBox="0 0 14 9">
  <path d="M1 7.6 L7 1.4 L13 7.6" fill="none" stroke="#fff" stroke-width="1.3"/>
</svg>
<div class="t" id="eng" style="left:1219px;top:741px;color:#fff;transform:scaleX(0.87)">ENG</div>
<div class="t" id="clk" style="left:1267px;top:732px;color:#fff;transform:scaleX(0.9)">17:26</div>
<div class="t" id="dat" style="left:1255px;top:750px;color:#fff;transform:scaleX(0.974)">27/2/2018</div>
<svg style="left:1325px;top:739px" width="26" height="26" viewBox="0 0 26 26">
  <path d="M0.4 1 H16.4 V12.6 H8 L4.2 16 V12.6 H0.4 Z" fill="#fff"/>
  <g fill="#101010"><rect x="3.2" y="3.8" width="10.4" height="1"/><rect x="3.2" y="6.2" width="10.4" height="1"/><rect x="3.2" y="8.6" width="10.4" height="1"/></g>
  <circle cx="16" cy="16.4" r="7.4" fill="#2b2b2b" stroke="#555" stroke-width="1"/>
  <text x="16" y="20.6" text-anchor="middle" font-family="Liberation Sans" font-weight="bold" font-size="11.5" fill="#fff">2</text>
</svg>
<div class="a" style="left:1361px;top:728px;width:1px;height:40px;background:#4a4a4a"></div>
</div>

<!-- ================= ANNOTATIONS ================= -->
<div id="annot">
<!-- red box around address -->
<div class="a" style="left:99px;top:45px;width:155px;height:28px;border:5px solid #ed1c24"></div>
<!-- right arrow (hollow) -->
<svg style="left:0px;top:0px" width="320" height="90" viewBox="0 0 320 90">
  <path d="M264.4 60.4 H284.4 V55.5 L305.6 65.5 L284.4 75.5 V70.6 H264.4 Z" fill="#fff" stroke="#ed1c24" stroke-width="4.7" stroke-linejoin="round"/>
</svg>
<div class="a" id="an1" style="left:316px;top:54px;font-size:24px;font-weight:bold;line-height:26px;transform-origin:0 0;transform:scaleX(0.815)">Πατάμε Enter</div>
<div class="a" id="an2" style="left:83px;top:616px;font-size:24px;font-weight:bold;line-height:26px;transform-origin:0 0;transform:scaleX(0.803)">Εξερευνητής αρχείων</div>
<!-- down arrow (hollow) -->
<svg style="left:0px;top:600px" width="320" height="168" viewBox="0 600 320 168">
  <path d="M167.1 682.5 V660 H179.1 V682.5 H184.7 L173.1 704 L161 682.5 Z" fill="#fff" stroke="#ed1c24" stroke-width="8" stroke-linejoin="round"/>
</svg>
<!-- red box around explorer icon -->
<div class="a" style="left:143px;top:711px;width:38px;height:43px;border:8px solid #ed1c24;border-bottom-width:7px"></div>
</div>

</body>
</html>
